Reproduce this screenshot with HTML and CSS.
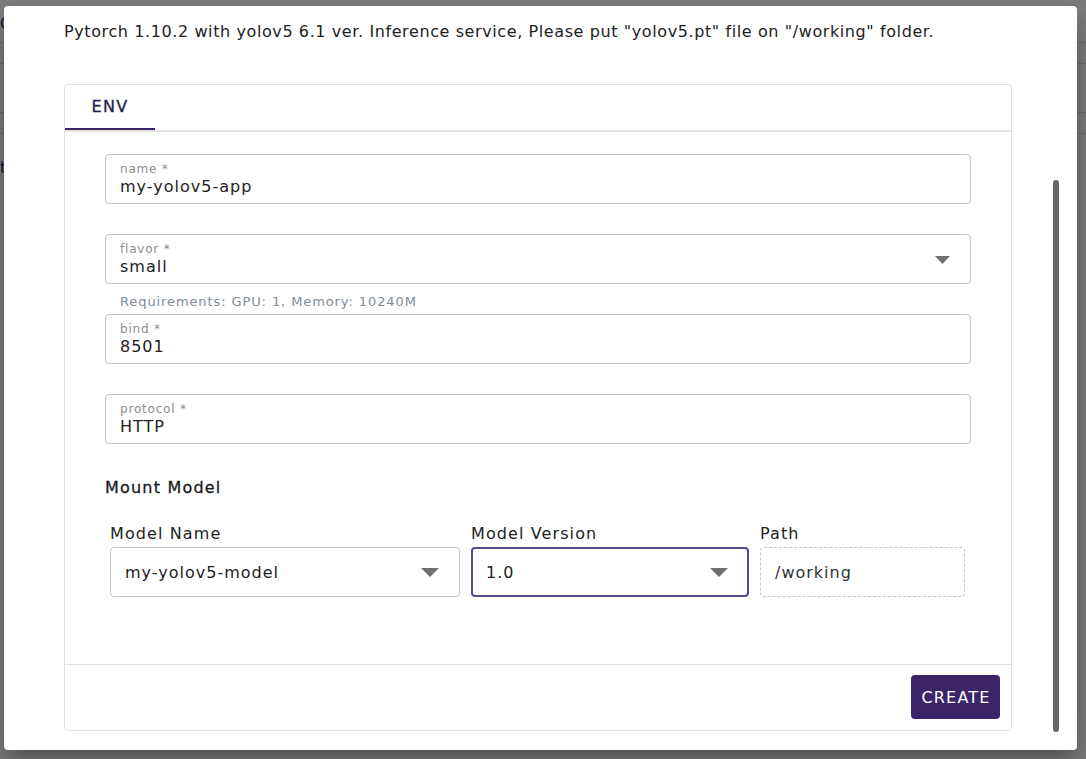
FILE: index.html
```html
<!DOCTYPE html>
<html lang="en">
<head>
<meta charset="utf-8">
<title>Create App</title>
<link rel="stylesheet" href="styles.css">
</head>
<body>
<div class="page">
  <div class="page-row page-head">Create</div>
  <div class="page-row row-a"></div>
  <div class="page-row row-b"></div>
  <div class="page-row row-a"></div>
  <div class="page-text">tag</div>
</div>
<div class="overlay"></div>
<div class="modal">
  <p class="desc">Pytorch 1.10.2 with yolov5 6.1 ver. Inference service, Please put "yolov5.pt" file on "/working" folder.</p>
  <div class="card">
    <div class="tabs"><div class="tab">ENV</div></div>
    <div class="content">
      <div class="field">
        <div class="field-body">
          <div class="field-label">name *</div>
          <div class="field-value">my-yolov5-app</div>
        </div>
      </div>
      <div class="field field-helped">
        <div class="field-body">
          <div class="field-label">flavor *</div>
          <div class="field-value">small</div>
        </div>
        <svg class="arrow" width="15" height="8" viewBox="0 0 15 8"><path d="M0 0H15L7.5 8Z" fill="#707070"/></svg>
      </div>
      <div class="helper">Requirements: GPU: 1, Memory: 10240M</div>
      <div class="field">
        <div class="field-body">
          <div class="field-label">bind *</div>
          <div class="field-value">8501</div>
        </div>
      </div>
      <div class="field">
        <div class="field-body">
          <div class="field-label">protocol *</div>
          <div class="field-value">HTTP</div>
        </div>
      </div>
      <h3 class="section">Mount Model</h3>
      <div class="model-row">
        <div class="model-col">
          <div class="model-label">Model Name</div>
          <div class="select">
            <span>my-yolov5-model</span>
            <svg class="arrow" width="18" height="9" viewBox="0 0 18 9"><path d="M0 0H18L9 9Z" fill="#707070"/></svg>
          </div>
        </div>
        <div class="model-col">
          <div class="model-label">Model Version</div>
          <div class="select select-focus">
            <span>1.0</span>
            <svg class="arrow" width="18" height="9" viewBox="0 0 18 9"><path d="M0 0H18L9 9Z" fill="#707070"/></svg>
          </div>
        </div>
        <div class="model-col">
          <div class="model-label">Path</div>
          <div class="select select-dashed">
            <span>/working</span>
          </div>
        </div>
      </div>
    </div>
    <div class="footer">
      <button class="create">CREATE</button>
    </div>
  </div>
  <div class="scrollbar"></div>
</div>
</body>
</html>
```

FILE: styles.css
```css
* { box-sizing: border-box; }
html, body { margin: 0; padding: 0; }
body {
  width: 1086px;
  height: 759px;
  overflow: hidden;
  position: relative;
  background: #ffffff;
  font-family: "DejaVu Sans", sans-serif;
  color: #222;
}
.page { width: 100%; }
.page-row { border-bottom: 1px solid #dcdcdc; }
.page-head {
  height: 43px;
  padding-top: 14px;
  font-size: 16px;
  line-height: 20px;
  color: #1c3370;
}
.row-a { height: 21px; }
.row-b { height: 49px; }
.page-text {
  margin-top: 24px;
  font-size: 16px;
  line-height: 20px;
  color: #1c3370;
}
.overlay {
  position: absolute;
  inset: 0;
  background: rgba(0, 0, 0, 0.5);
}
.modal {
  position: absolute;
  left: 4px;
  top: 6px;
  width: 1073px;
  height: 744px;
  background: #fff;
  border-radius: 4px;
  padding: 14px 65px 19px 60px;
  box-shadow: 0 11px 15px -7px rgba(0,0,0,0.2), 0 24px 38px 3px rgba(0,0,0,0.14), 0 9px 46px 8px rgba(0,0,0,0.12);
}
.desc {
  margin: 0 0 40px;
  font-size: 16px;
  line-height: 24px;
  letter-spacing: 0.6px;
  color: #222;
  white-space: nowrap;
}
.card {
  border: 1px solid #e0e0e0;
  border-radius: 4px;
}
.tabs {
  display: flex;
  border-bottom: 2px solid #e3e3e3;
}
.tab {
  width: 90px;
  height: 45px;
  line-height: 44px;
  text-align: center;
  font-size: 16px;
  letter-spacing: 1.3px;
  color: #241d4f;
  -webkit-text-stroke: 0.3px #241d4f;
  border-bottom: 2px solid #3b2468;
}
.content {
  padding: 22px 40px 67px;
}
.field {
  height: 50px;
  border: 1px solid #c4c4c4;
  border-radius: 4px;
  padding: 7px 20px 0 14px;
  margin-bottom: 30px;
  display: flex;
  align-items: flex-start;
}
.field-helped { margin-bottom: 0; }
.field-body { flex: 1; }
.field-label {
  font-size: 12px;
  line-height: 14px;
  letter-spacing: 0.8px;
  color: #8c8c8c;
}
.field-value {
  font-size: 16px;
  line-height: 20px;
  padding-top: 1px;
  letter-spacing: 1px;
  color: #222;
}
.field .arrow { align-self: center; margin-top: -6px; }
.helper {
  height: 30px;
  padding: 10px 0 0 15px;
  font-size: 13px;
  line-height: 16px;
  letter-spacing: 0.9px;
  color: #7f8c99;
}
.section {
  margin: 0;
  height: 26px;
  font-size: 16px;
  line-height: 27px;
  font-weight: normal;
  letter-spacing: 1.2px;
  color: #1a1a1a;
  -webkit-text-stroke: 0.3px #1a1a1a;
}
.model-row {
  margin-top: 23px;
  padding: 0 5px;
  display: grid;
  grid-template-columns: 350px 278px 205px;
  column-gap: 11px;
}
.model-label {
  font-size: 16px;
  line-height: 21px;
  letter-spacing: 1.1px;
  color: #222;
  margin-bottom: 3px;
}
.select {
  height: 50px;
  border: 1px solid #c4c4c4;
  border-radius: 4px;
  padding: 0 20px 0 14px;
  display: flex;
  align-items: center;
  justify-content: space-between;
  font-size: 16px;
  letter-spacing: 1px;
  color: #222;
}
.select-focus {
  border: 2px solid #5a4b86;
  padding: 0 19px 0 13px;
}
.select-dashed {
  border: 1px dashed #c8c8c8;
  color: #333;
}
.footer {
  border-top: 1px solid #e0e0e0;
  padding: 10px 11px 11px;
  display: flex;
  justify-content: flex-end;
}
.create {
  width: 89px;
  height: 44px;
  border: none;
  border-radius: 4px;
  background: #3b2468;
  color: #fff;
  font-family: inherit;
  font-size: 16px;
  letter-spacing: 1.2px;
  padding: 0 0 0 1px;
}
.scrollbar {
  position: absolute;
  left: 1049px;
  top: 174px;
  width: 6px;
  height: 552px;
  border-radius: 3px;
  background: #686868;
}
```
